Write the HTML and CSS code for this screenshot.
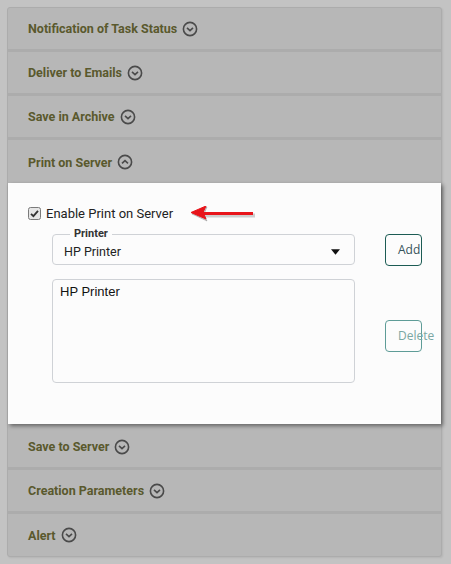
FILE: index.html
```html
<!DOCTYPE html>
<html>
<head>
<meta charset="utf-8">
<link rel="stylesheet" href="styles.css">
</head>
<body>
<div class="accordion">
  <div class="row"><span class="title">Notification of Task Status</span><svg class="chev" viewBox="0 0 16 16"><circle cx="8" cy="8" r="6.6"/><path d="M5 6.8 L8 9.6 L11 6.8"/></svg></div>
  <div class="row"><span class="title">Deliver to Emails</span><svg class="chev" viewBox="0 0 16 16"><circle cx="8" cy="8" r="6.6"/><path d="M5 6.8 L8 9.6 L11 6.8"/></svg></div>
  <div class="row"><span class="title">Save in Archive</span><svg class="chev" viewBox="0 0 16 16"><circle cx="8" cy="8" r="6.6"/><path d="M5 6.8 L8 9.6 L11 6.8"/></svg></div>
  <div class="row open"><span class="title">Print on Server</span><svg class="chev" viewBox="0 0 16 16"><circle cx="8" cy="8" r="6.6"/><path d="M5 9.4 L8 6.6 L11 9.4"/></svg></div>
  <div class="body">
    <div class="enable">
      <svg class="cb" viewBox="0 0 13 13"><rect x="0.5" y="0.5" width="12" height="12" rx="2" ry="2"/><path d="M3 6.8 L5.4 9.2 L10 3.8"/></svg>
      <span class="enable-label">Enable Print on Server</span>
      <svg class="arrow" width="68" height="20" viewBox="0 0 68 20"><g class="arrow-shadow"><path d="M14 9.5 L64 9.5" /><path d="M1 8 L16 1 L13 8 L16 15 Z"/></g><g class="arrow-red"><path d="M12 7.5 L62 7.5"/><path d="M0 6.5 L15 0 L12 6.5 L15 13 Z"/></g></svg>
    </div>
    <div class="grid">
      <fieldset class="printer">
        <legend>Printer</legend>
        <div class="select"><span>HP Printer</span><svg class="caret" viewBox="0 0 10 6"><path d="M0 0 L10 0 L5 6 Z"/></svg></div>
      </fieldset>
      <div class="btn add">Add</div>
      <div class="list"><div class="item">HP Printer</div></div>
      <div class="btn del">Delete</div>
    </div>
  </div>
  <div class="row"><span class="title">Save to Server</span><svg class="chev" viewBox="0 0 16 16"><circle cx="8" cy="8" r="6.6"/><path d="M5 6.8 L8 9.6 L11 6.8"/></svg></div>
  <div class="row"><span class="title">Creation Parameters</span><svg class="chev" viewBox="0 0 16 16"><circle cx="8" cy="8" r="6.6"/><path d="M5 6.8 L8 9.6 L11 6.8"/></svg></div>
  <div class="row last"><span class="title">Alert</span><svg class="chev" viewBox="0 0 16 16"><circle cx="8" cy="8" r="6.6"/><path d="M5 6.8 L8 9.6 L11 6.8"/></svg></div>
</div>
</body>
</html>
```
FILE: styles.css
```css
html, body {
  margin: 0;
  padding: 0;
  background: #c3c3c3;
  height: 100%;
}
body {
  padding-top: 7px;
  box-sizing: border-box;
  font-family: Roboto, "Liberation Sans", sans-serif;
}
.accordion {
  margin-left: 7px;
  width: 433px;
  border: 1px solid #acacac;
  border-radius: 3px;
  background: #b7b7b7;
  box-shadow: 1px 1px 2px rgba(0,0,0,0.08);
}
.row {
  height: 41px;
  border-bottom: 3px solid #acacac;
  display: flex;
  align-items: center;
  padding-left: 20px;
  gap: 5px;
}
.row.open {
  height: 42px;
  border-bottom: none;
  padding-top: 1px;
}
.row.last {
  border-bottom: none;
  height: 42px;
}
.title {
  font-size: 12.5px;
  font-weight: 700;
  color: #5a592d;
}
.chev {
  width: 16px;
  height: 16px;
  fill: none;
  stroke: #4a4a4a;
  stroke-width: 1.6;
}
.body {
  position: relative;
  background: #fcfcfc;
  box-shadow: 2px 2px 4px rgba(0,0,0,0.45);
  padding: 23px 0 41px 20px;
  height: 241px;
  box-sizing: border-box;
  margin-bottom: 2px;
}
.enable {
  display: flex;
  align-items: center;
  height: 14px;
}
.cb {
  width: 13px;
  height: 13px;
}
.cb rect {
  fill: #e6e6e6;
  stroke: #7a7a7a;
  stroke-width: 1;
}
.cb path {
  fill: none;
  stroke: #333;
  stroke-width: 1.8;
}
.enable-label {
  margin-left: 5px;
  font-size: 13px;
  color: #222;
}
.arrow {
  margin-left: 18px;
  margin-top: 5px;
}
.arrow-red path {
  stroke: #e8141a;
  stroke-width: 3;
  fill: #e8141a;
  stroke-linejoin: round;
}
.arrow-red path:last-child {
  stroke-width: 1;
}
.arrow-shadow path {
  stroke: rgba(0,0,0,0.18);
  stroke-width: 4;
  fill: rgba(0,0,0,0.18);
}
.arrow-shadow path:last-child {
  stroke-width: 1;
}
.grid {
  margin-left: 24px;
  margin-top: 8px;
  display: grid;
  grid-template-columns: 303px 37px;
  column-gap: 30px;
  align-items: start;
}
.printer {
  margin: 0;
  padding: 0 11px;
  border: 1px solid #cfd2d6;
  border-radius: 4px;
  min-width: 0;
}
.printer legend {
  font-size: 11px;
  font-weight: 700;
  line-height: 12px;
  color: #333;
  padding: 0 4px;
  margin-left: 6px;
}
.select {
  height: 24px;
  display: flex;
  align-items: center;
  justify-content: space-between;
  padding-bottom: 1px;
  box-sizing: border-box;
  font-size: 12.5px;
  color: #222;
}
.caret {
  width: 9px;
  height: 6px;
  fill: #111;
  margin-right: 3px;
}
.btn {
  box-sizing: border-box;
  width: 37px;
  height: 32px;
  border-radius: 4px;
  font-family: "Open Sans", "Liberation Sans", sans-serif;
  font-size: 12px;
  white-space: nowrap;
  padding-left: 12px;
  line-height: 30px;
  overflow: visible;
}
.add {
  margin-top: 6px;
  border: 1px solid #1c5c54;
  color: #36525a;
}
.list {
  margin-top: 13px;
  height: 104px;
  box-sizing: border-box;
  border: 1px solid #cfd2d6;
  border-radius: 4px;
  padding: 4px 7px;
}
.item {
  font-family: "Liberation Sans", Arial, sans-serif;
  font-size: 13px;
  color: #111;
  line-height: 15px;
}
.del {
  margin-top: 54px;
  border: 1px solid #5e9c97;
  color: #7aa7a3;
}
```
